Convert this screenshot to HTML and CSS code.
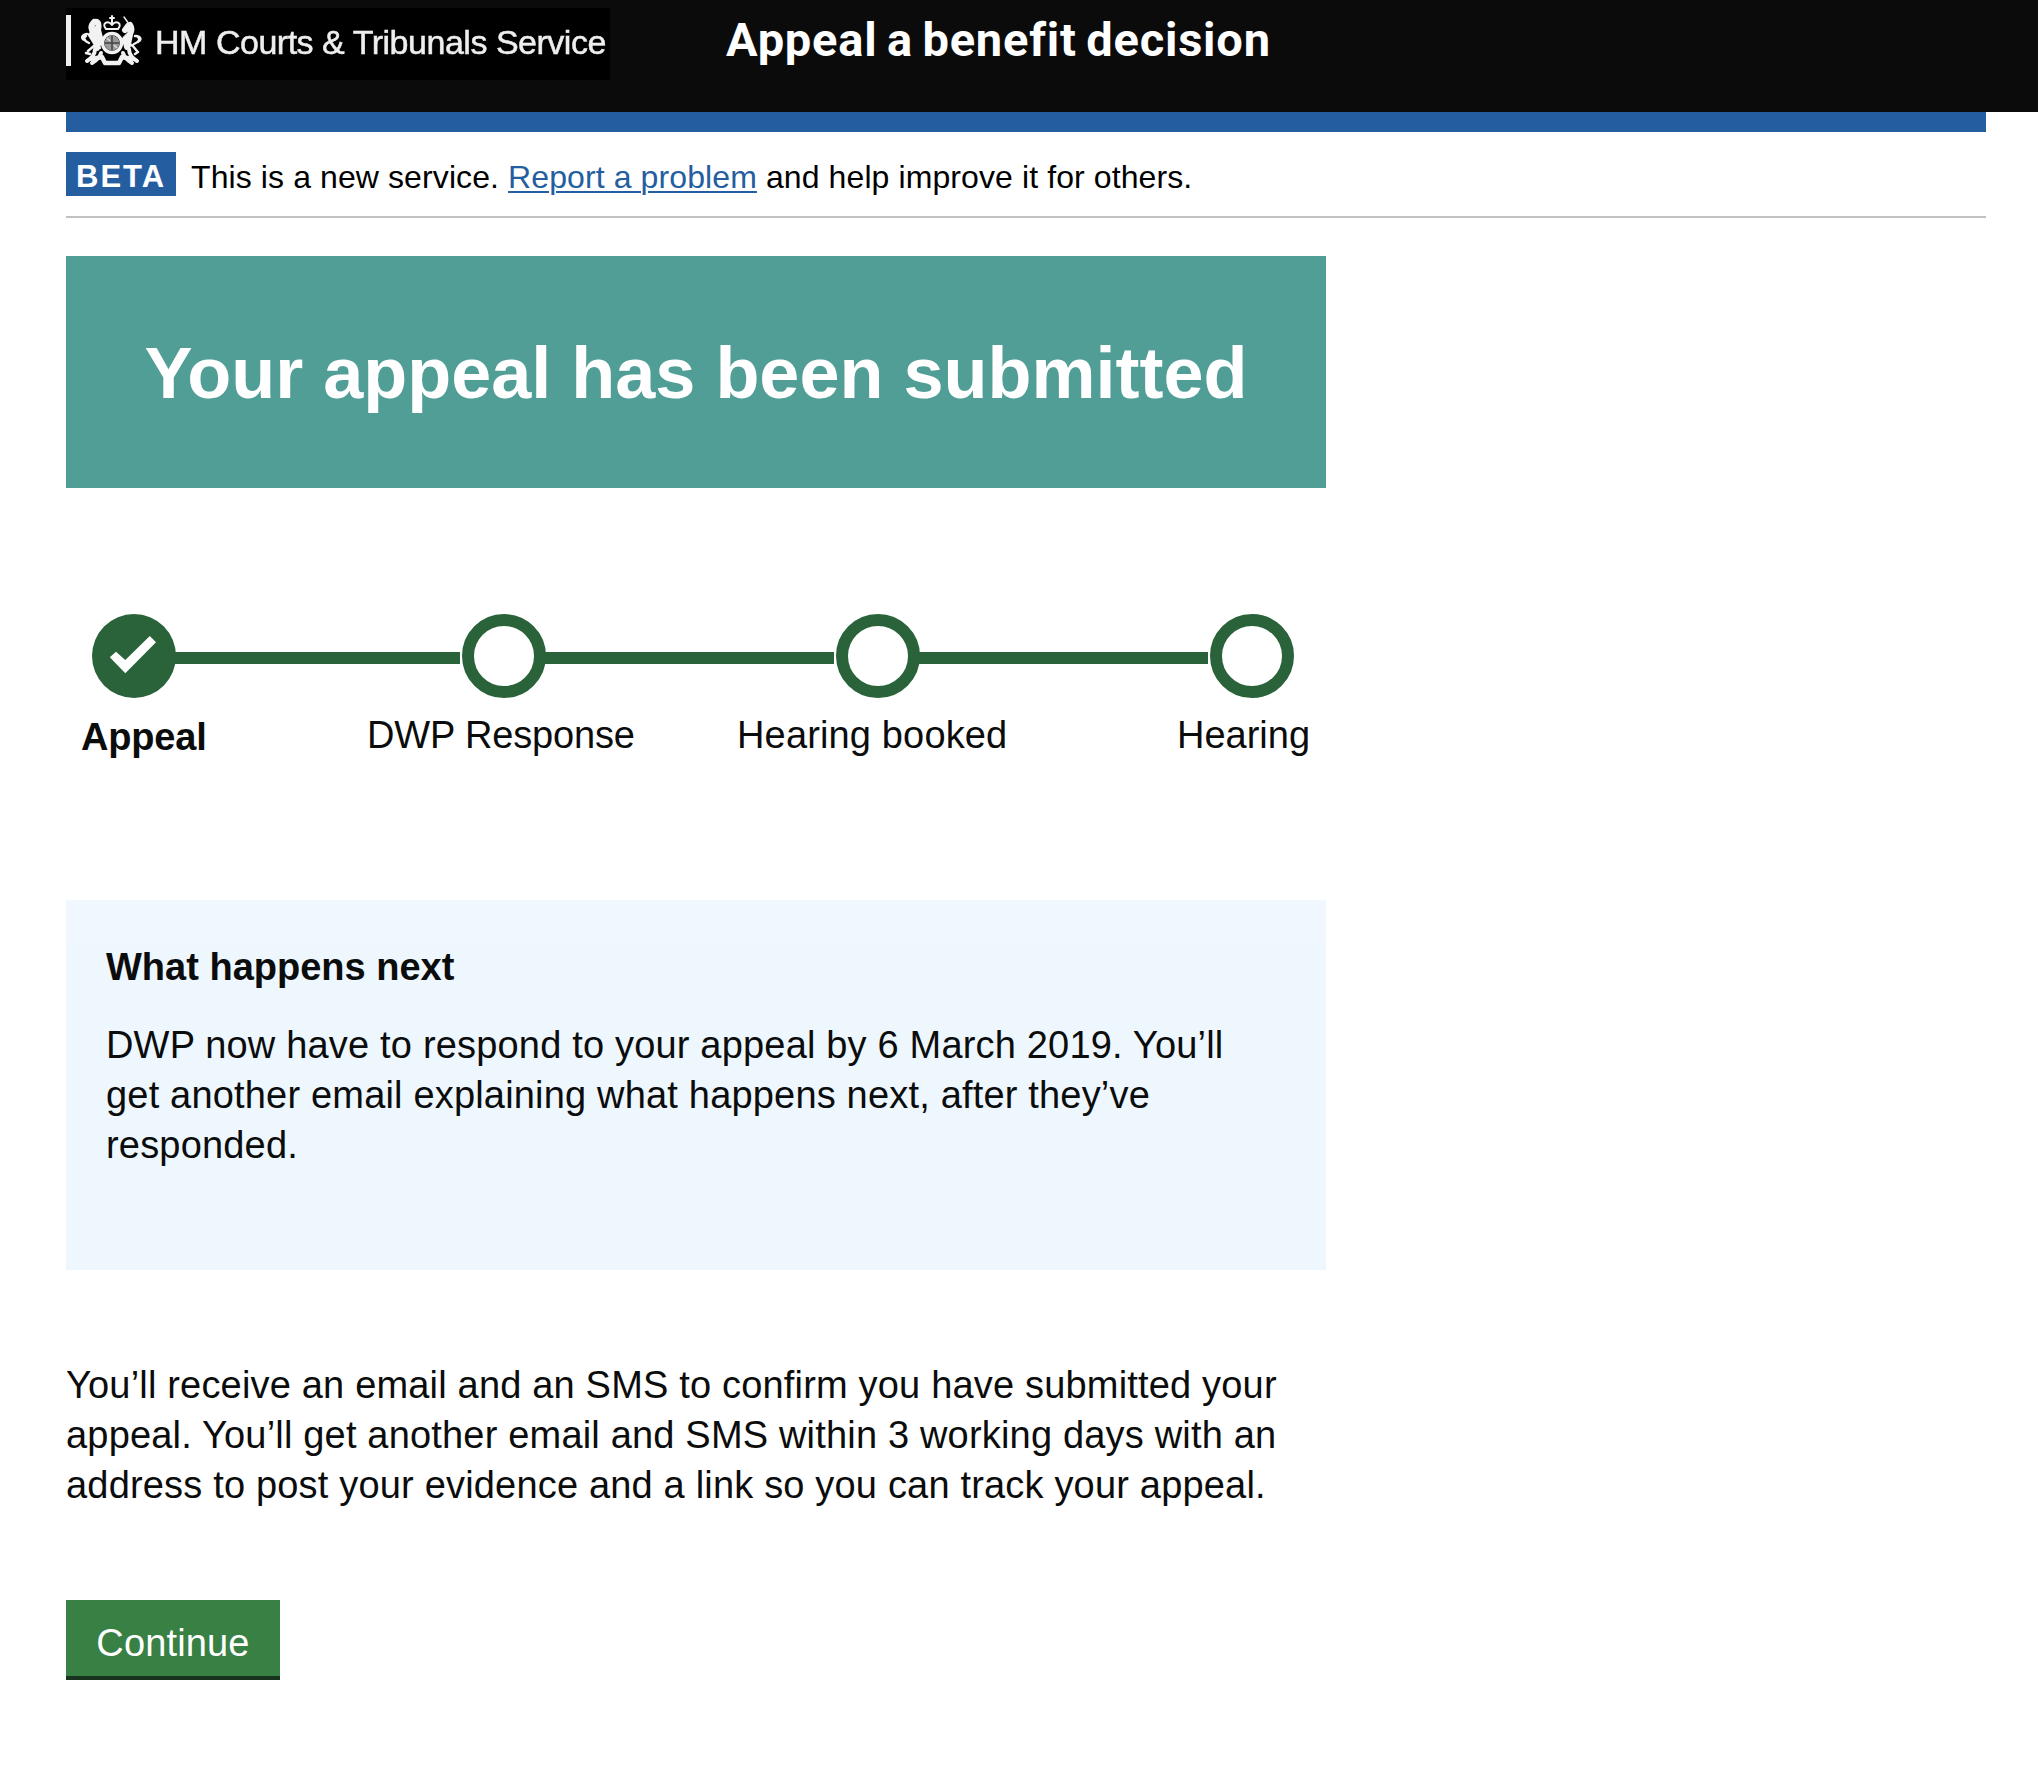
FILE: index.html
```html
<!DOCTYPE html>
<html lang="en">
<head>
<meta charset="utf-8">
<title>Appeal a benefit decision</title>
<link rel="stylesheet" href="styles.css">
</head>
<body>
<header class="header">
  <div class="logo">
    <span class="logo-bar"></span>
    <svg class="crest" viewBox="0 0 62 52" aria-hidden="true">
      <g fill="none" stroke="#f2f2f2" stroke-width="3" stroke-linecap="round" stroke-linejoin="round">
        <path d="M13 7c-4 4-3 8 0 11M14 7c4-1 4 4 3 8l2 8-3 10M13 14l2 14M10 20l5 8" stroke-width="6"/>
        <path d="M6 19c-6 1-6 5-2 6M8 28c-5-2-6-5-3-7M7 36l7-6 5 3M5 38l4 1" stroke-width="2.4"/>
        <path d="M43 2l5 7" stroke-width="1.4"/>
        <path d="M49 10c2 3 2 6 0 9l-5 5 2 8M47 11l-3 4M50 15l-3 14" stroke-width="6"/>
        <path d="M54 21c6 0 7 4 3 6M53 29c5-2 7-5 3-8M45 32l6-2 5 6M57 37l-3 2" stroke-width="2.4"/>
        <path d="M14 34c0 6-3 9-8 12M20 38c-1 4-4 7-9 10M48 34c0 6 3 9 8 12M42 38c1 4 4 7 9 10" stroke-width="4"/>
        <path d="M11 44l10-2 3 6h14l3-6 10 2" stroke-width="4.5"/>
        <circle cx="31" cy="28" r="9.5" stroke-width="3.4"/>
        <path d="M25 14c-5-6 2-9 6-4 4-5 11-2 6 4zM31 1v9M29 3h4" stroke-width="2"/>
      </g>
      <circle cx="31" cy="28" r="7.5" fill="#999"/>
      <path d="M31 21v14M24 28h14" stroke="#444" stroke-width="1.5"/>
      <path d="M26 23l3 3M33 30l3 3" stroke="#ddd" stroke-width="1.6"/>
    </svg>
    <span class="logo-text">HM Courts &amp; Tribunals Service</span>
  </div>
  <div class="service-name">Appeal a benefit decision</div>
</header>
<div class="page">
  <div class="brand-bar"></div>
  <div class="phase">
    <strong class="phase-tag">BETA</strong>
    <span class="phase-text">This is a new service. <a class="link" href="#">Report a problem</a> and help improve it for others.</span>
  </div>
  <main class="content">
    <div class="banner"><h1 class="banner-title">Your appeal has been submitted</h1></div>
    <div class="track">
      <span class="dot dot-done"><svg viewBox="0 0 84 84" aria-hidden="true"><path d="M17.8 43.3L24 37.7l9.3 8.3L57.8 22l6.2 6.3-30.7 31z" fill="#fff"/></svg></span>
      <span class="rail rail-first"></span><span class="dot"></span>
      <span class="rail"></span><span class="dot"></span>
      <span class="rail"></span><span class="dot"></span>
    </div>
    <div class="labels">
      <strong class="label-current">Appeal</strong>
      <span class="label-response">DWP Response</span>
      <span>Hearing booked</span>
      <span class="label-hearing">Hearing</span>
    </div>
    <section class="next">
      <h2 class="next-title">What happens next</h2>
      <p class="text next-text">DWP now have to respond to your appeal by 6 March 2019. You’ll get another email explaining what happens next, after they’ve responded.</p>
    </section>
    <p class="text">You’ll receive an email and an SMS to confirm you have submitted your appeal. You’ll get another email and SMS within 3 working days with an address to post your evidence and a link so you can track your appeal.</p>
    <a class="button" href="#">Continue</a>
  </main>
</div>
</body>
</html>
```

FILE: styles.css
```css
* { box-sizing: border-box; }
body {
  margin: 0;
  background: #fff;
  color: #0b0c0c;
  font-family: "Liberation Sans", Arial, sans-serif;
}
.header {
  display: flex;
  align-items: flex-start;
  height: 112px;
  padding: 8px 66px 0;
  background: #0b0b0b;
}
.logo {
  display: flex;
  flex: none;
  align-items: flex-start;
  width: 544px;
  height: 72px;
  padding-top: 7px;
  background: #000;
}
.logo-bar { flex: none; width: 5px; height: 51px; background: #eee; }
.crest { flex: none; width: 62px; height: 52px; margin-left: 10px; filter: blur(0.5px); }
.logo-text {
  margin: 2px 0 0 12px;
  color: #eee;
  font-size: 34px;
  letter-spacing: -0.48px;
  line-height: 50px;
  white-space: nowrap;
  -webkit-text-stroke: 0.5px #eee;
  filter: blur(0.4px);
}
.service-name {
  margin: 2px 0 0 116px;
  color: #fff;
  font-family: Roboto, sans-serif;
  font-size: 47px;
  font-weight: 700;
  letter-spacing: 0.8px;
  line-height: 60px;
  white-space: nowrap;
  word-spacing: -3px;
}
.page { width: 1920px; margin-left: 66px; }
.brand-bar { height: 20px; background: #245ea0; }
.phase {
  display: flex;
  align-items: flex-start;
  height: 86px;
  padding-top: 20px;
  border-bottom: 2px solid #bfc1c3;
  color: #000;
}
.phase-tag {
  width: 110px;
  height: 44px;
  padding: 5px 0 0 10px;
  background: #245ea0;
  color: #fff;
  font-size: 31px;
  letter-spacing: 2px;
  line-height: 39px;
}
.phase-text {
  margin: 5px 0 0 15px;
  font-size: 32px;
  letter-spacing: 0.1px;
  line-height: 40px;
  white-space: nowrap;
}
.link { color: #245ea0; text-decoration-thickness: 2px; text-underline-offset: 3px; }
.content { width: 1260px; padding-top: 38px; }
.banner { height: 232px; padding-top: 77px; background: #509e95; text-align: center; }
.banner-title { margin: 0; color: #fff; font-size: 72px; line-height: 80px; white-space: nowrap; }
.track { display: flex; align-items: flex-start; margin: 126px 32px 0 26px; }
.dot { flex: none; width: 84px; height: 84px; border: 12px solid #2a6339; border-radius: 50%; }
.dot-done { border: 0; background: #2a6339; }
.dot-done svg { display: block; }
.rail { flex: 1; height: 12px; margin: 38px 2px 0 -1px; background: #2a6339; }
.rail-first { flex: none; width: 285px; }
.labels {
  display: grid;
  grid-template-columns: 286px 370px 440px auto;
  align-items: start;
  margin: 12px 0 0 15px;
  font-size: 38px;
  letter-spacing: 0.15px;
  line-height: 50px;
}
.label-current { padding-top: 2px; letter-spacing: -0.2px; }
.label-response { letter-spacing: -0.15px; }
.label-hearing { letter-spacing: 0; }
.next {
  height: 370px;
  margin-top: 138px;
  padding: 42px 60px 0 40px;
  background: linear-gradient(#f0f7ff 46px, #eef6fe 46px);
}
.next-title { margin: 0 0 28px; font-size: 38px; line-height: 50px; }
.text { margin: 90px 0; font-size: 38px; letter-spacing: 0.18px; line-height: 50px; }
.next-text { margin: 0; }
.button {
  display: block;
  width: 214px;
  height: 80px;
  padding-top: 18px;
  border-bottom: 4px solid #18341f;
  background: #388043;
  color: #fff;
  font-size: 38px;
  letter-spacing: 0.15px;
  line-height: 50px;
  text-align: center;
  text-decoration: none;
}
```
